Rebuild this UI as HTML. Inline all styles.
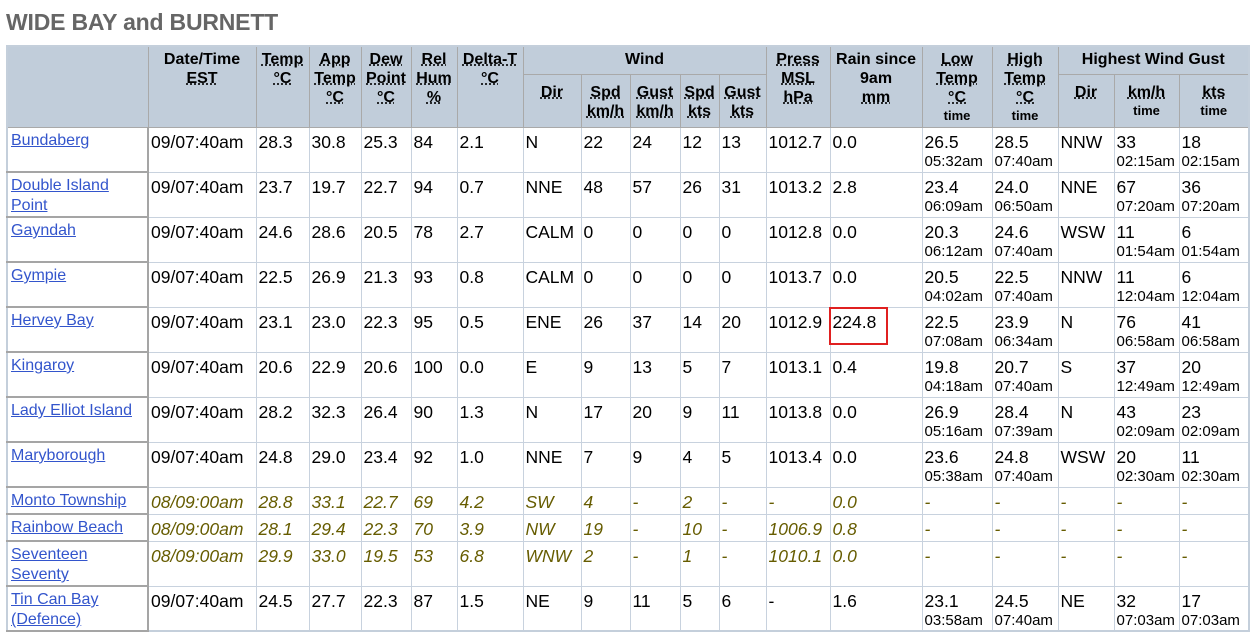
<!DOCTYPE html>
<html><head><meta charset="utf-8"><style>
body{margin:0;background:#fff;font-family:"Liberation Sans",Arial,sans-serif;}
h2{position:absolute;left:6px;top:9px;margin:0;font-size:23px;color:#666;font-weight:bold;letter-spacing:-0.2px}
table{position:absolute;left:6px;top:45px;border-collapse:collapse;table-layout:fixed;width:1242px;border:2px solid #c4cfdb}
th{background:#c1cdda;font-size:16px;font-weight:bold;color:#000;border:1px solid #a9a9a9;vertical-align:top;padding:3px 0 0;line-height:19px;text-align:center}
th u{text-decoration:underline dotted;}
th small{font-size:13px;display:block;line-height:17px}
td{font-size:17.5px;border:1px solid #c8d2de;vertical-align:top;padding:4px 1px 0 2px;line-height:20px;white-space:nowrap;overflow:hidden}
td small{font-size:15px;display:block;line-height:19px}
td.n{font-size:16px;border-right:2px solid #a5a5a5;border-bottom:2px solid #a5a5a5;white-space:normal;padding:3px 2px 0 3px;line-height:20px}
td.n a{color:#3355cc;text-decoration:underline}
tr.r{height:45px}
tr.s{height:27px}
tr.o td:not(.n){font-style:italic;color:#665c00}
.box{position:absolute;left:829px;top:307px;width:55px;height:34px;border:2px solid #e02020}
</style></head><body>
<h2>WIDE BAY and BURNETT</h2>
<table>
<colgroup><col style="width:141px"><col style="width:108px"><col style="width:53px"><col style="width:52px"><col style="width:50px"><col style="width:46px"><col style="width:66px"><col style="width:58px"><col style="width:49px"><col style="width:50px"><col style="width:39px"><col style="width:47px"><col style="width:64px"><col style="width:92px"><col style="width:70px"><col style="width:66px"><col style="width:56px"><col style="width:65px"><col style="width:70px"></colgroup>
<tr style="height:28px"><th rowspan="2"></th><th rowspan="2">Date/Time<br><u>EST</u></th><th rowspan="2"><u>Temp</u><br><u>°C</u></th><th rowspan="2"><u>App</u><br><u>Temp</u><br><u>°C</u></th><th rowspan="2"><u>Dew</u><br><u>Point</u><br><u>°C</u></th><th rowspan="2"><u>Rel</u><br><u>Hum</u><br><u>%</u></th><th rowspan="2"><u>Delta-T</u><br><u>°C</u></th><th colspan="5">Wind</th><th rowspan="2"><u>Press</u><br><u>MSL</u><br><u>hPa</u></th><th rowspan="2">Rain since<br>9am<br><u>mm</u></th><th rowspan="2"><u>Low</u><br><u>Temp</u><br><u>°C</u><small>time</small></th><th rowspan="2"><u>High</u><br><u>Temp</u><br><u>°C</u><small>time</small></th><th colspan="3">Highest Wind Gust</th></tr>
<tr style="height:53px"><th style="padding-top:8px"><u>Dir</u></th><th style="padding-top:8px"><u>Spd</u><br><u>km/h</u></th><th style="padding-top:8px"><u>Gust</u><br><u>km/h</u></th><th style="padding-top:8px"><u>Spd</u><br><u>kts</u></th><th style="padding-top:8px"><u>Gust</u><br><u>kts</u></th><th style="padding-top:8px"><u>Dir</u></th><th style="padding-top:8px"><u>km/h</u><small>time</small></th><th style="padding-top:8px"><u>kts</u><small>time</small></th></tr>
<tr class="r"><td class="n"><a>Bundaberg</a></td><td>09/07:40am</td><td>28.3</td><td>30.8</td><td>25.3</td><td>84</td><td>2.1</td><td>N</td><td>22</td><td>24</td><td>12</td><td>13</td><td>1012.7</td><td>0.0</td><td>26.5<small>05:32am</small></td><td>28.5<small>07:40am</small></td><td>NNW</td><td>33<small>02:15am</small></td><td>18<small>02:15am</small></td></tr>
<tr class="r"><td class="n"><a>Double Island Point</a></td><td>09/07:40am</td><td>23.7</td><td>19.7</td><td>22.7</td><td>94</td><td>0.7</td><td>NNE</td><td>48</td><td>57</td><td>26</td><td>31</td><td>1013.2</td><td>2.8</td><td>23.4<small>06:09am</small></td><td>24.0<small>06:50am</small></td><td>NNE</td><td>67<small>07:20am</small></td><td>36<small>07:20am</small></td></tr>
<tr class="r"><td class="n"><a>Gayndah</a></td><td>09/07:40am</td><td>24.6</td><td>28.6</td><td>20.5</td><td>78</td><td>2.7</td><td>CALM</td><td>0</td><td>0</td><td>0</td><td>0</td><td>1012.8</td><td>0.0</td><td>20.3<small>06:12am</small></td><td>24.6<small>07:40am</small></td><td>WSW</td><td>11<small>01:54am</small></td><td>6<small>01:54am</small></td></tr>
<tr class="r"><td class="n"><a>Gympie</a></td><td>09/07:40am</td><td>22.5</td><td>26.9</td><td>21.3</td><td>93</td><td>0.8</td><td>CALM</td><td>0</td><td>0</td><td>0</td><td>0</td><td>1013.7</td><td>0.0</td><td>20.5<small>04:02am</small></td><td>22.5<small>07:40am</small></td><td>NNW</td><td>11<small>12:04am</small></td><td>6<small>12:04am</small></td></tr>
<tr class="r"><td class="n"><a>Hervey Bay</a></td><td>09/07:40am</td><td>23.1</td><td>23.0</td><td>22.3</td><td>95</td><td>0.5</td><td>ENE</td><td>26</td><td>37</td><td>14</td><td>20</td><td>1012.9</td><td>224.8</td><td>22.5<small>07:08am</small></td><td>23.9<small>06:34am</small></td><td>N</td><td>76<small>06:58am</small></td><td>41<small>06:58am</small></td></tr>
<tr class="r"><td class="n"><a>Kingaroy</a></td><td>09/07:40am</td><td>20.6</td><td>22.9</td><td>20.6</td><td>100</td><td>0.0</td><td>E</td><td>9</td><td>13</td><td>5</td><td>7</td><td>1013.1</td><td>0.4</td><td>19.8<small>04:18am</small></td><td>20.7<small>07:40am</small></td><td>S</td><td>37<small>12:49am</small></td><td>20<small>12:49am</small></td></tr>
<tr class="r"><td class="n"><a>Lady Elliot Island</a></td><td>09/07:40am</td><td>28.2</td><td>32.3</td><td>26.4</td><td>90</td><td>1.3</td><td>N</td><td>17</td><td>20</td><td>9</td><td>11</td><td>1013.8</td><td>0.0</td><td>26.9<small>05:16am</small></td><td>28.4<small>07:39am</small></td><td>N</td><td>43<small>02:09am</small></td><td>23<small>02:09am</small></td></tr>
<tr class="r"><td class="n"><a>Maryborough</a></td><td>09/07:40am</td><td>24.8</td><td>29.0</td><td>23.4</td><td>92</td><td>1.0</td><td>NNE</td><td>7</td><td>9</td><td>4</td><td>5</td><td>1013.4</td><td>0.0</td><td>23.6<small>05:38am</small></td><td>24.8<small>07:40am</small></td><td>WSW</td><td>20<small>02:30am</small></td><td>11<small>02:30am</small></td></tr>
<tr class="s o"><td class="n"><a>Monto Township</a></td><td>08/09:00am</td><td>28.8</td><td>33.1</td><td>22.7</td><td>69</td><td>4.2</td><td>SW</td><td>4</td><td>-</td><td>2</td><td>-</td><td>-</td><td>0.0</td><td>-</td><td>-</td><td>-</td><td>-</td><td>-</td></tr>
<tr class="s o"><td class="n"><a>Rainbow Beach</a></td><td>08/09:00am</td><td>28.1</td><td>29.4</td><td>22.3</td><td>70</td><td>3.9</td><td>NW</td><td>19</td><td>-</td><td>10</td><td>-</td><td>1006.9</td><td>0.8</td><td>-</td><td>-</td><td>-</td><td>-</td><td>-</td></tr>
<tr class="r o"><td class="n"><a>Seventeen Seventy</a></td><td>08/09:00am</td><td>29.9</td><td>33.0</td><td>19.5</td><td>53</td><td>6.8</td><td>WNW</td><td>2</td><td>-</td><td>1</td><td>-</td><td>1010.1</td><td>0.0</td><td>-</td><td>-</td><td>-</td><td>-</td><td>-</td></tr>
<tr class="r"><td class="n"><a>Tin Can Bay (Defence)</a></td><td>09/07:40am</td><td>24.5</td><td>27.7</td><td>22.3</td><td>87</td><td>1.5</td><td>NE</td><td>9</td><td>11</td><td>5</td><td>6</td><td>-</td><td>1.6</td><td>23.1<small>03:58am</small></td><td>24.5<small>07:40am</small></td><td>NE</td><td>32<small>07:03am</small></td><td>17<small>07:03am</small></td></tr>
</table>
<div class="box"></div>
</body></html>
